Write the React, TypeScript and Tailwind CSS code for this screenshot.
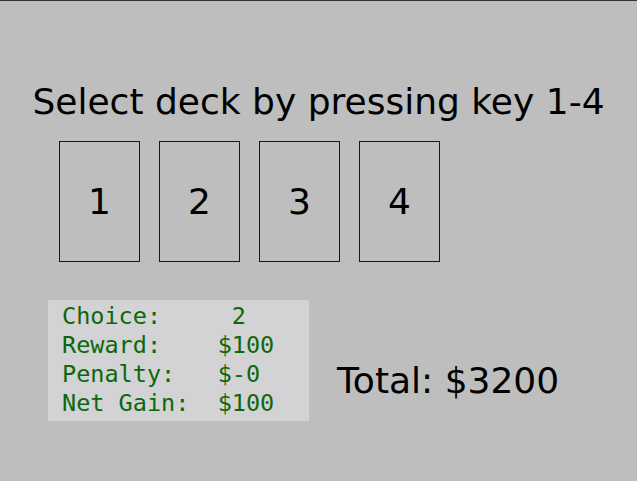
const decks = [1, 2, 3, 4];

const rows = [
  "Choice:     2",
  "Reward:    $100",
  "Penalty:   $-0",
  "Net Gain:  $100",
];

const App = () => {
  return (
    <div className="w-[637px] h-[481px] overflow-hidden bg-[#bebebe] border-t border-[#353535] font-['DejaVu_Sans',sans-serif] text-black">
      <h1 className="mt-[83px] text-center text-[36px] leading-[36px]">
        Select deck by pressing key 1-4
      </h1>

      <div className="mt-[21px] ml-[59px] flex gap-[19px]">
        {decks.map((n) => (
          <div
            key={n}
            className="w-[81px] h-[121px] border border-[#0000cc] flex items-center justify-center text-[36px] leading-none"
          >
            {n}
          </div>
        ))}
      </div>

      <div className="mt-[38px] ml-[48px] flex items-start">
        <div className="w-[261px] h-[121px] bg-[#d3d2d4] pl-[14px] pt-[2px] font-['DejaVu_Sans_Mono',monospace] text-[23.5px] leading-[29px] text-[#0a690a]">
          {rows.map((r) => (
            <div key={r} className="whitespace-pre">
              {r}
            </div>
          ))}
        </div>
        <p className="ml-[28px] mt-[63px] text-[36px] leading-[36px]">
          Total: $3200
        </p>
      </div>
    </div>
  );
};

export default App;
